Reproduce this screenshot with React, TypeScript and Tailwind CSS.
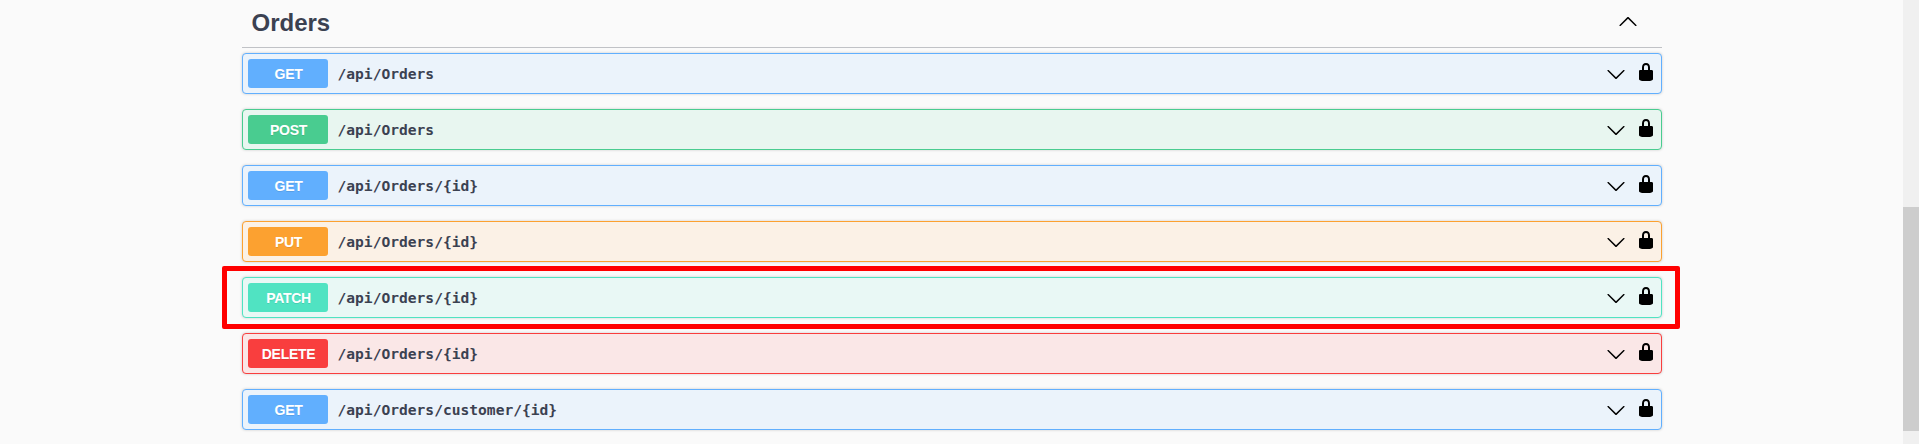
type Method = "GET" | "POST" | "PUT" | "PATCH" | "DELETE";

interface Operation {
  method: Method;
  path: string;
  highlighted?: boolean;
}

const operations: Operation[] = [
  { method: "GET", path: "/api/Orders" },
  { method: "POST", path: "/api/Orders" },
  { method: "GET", path: "/api/Orders/{id}" },
  { method: "PUT", path: "/api/Orders/{id}" },
  { method: "PATCH", path: "/api/Orders/{id}", highlighted: true },
  { method: "DELETE", path: "/api/Orders/{id}" },
  { method: "GET", path: "/api/Orders/customer/{id}" },
];

const styles: Record<Method, { row: string; badge: string }> = {
  GET: { row: "border-[#61affe] bg-[#ebf3fb]", badge: "bg-[#61affe]" },
  POST: { row: "border-[#49cc90] bg-[#e8f6f0]", badge: "bg-[#49cc90]" },
  PUT: { row: "border-[#fca130] bg-[#fbf1e6]", badge: "bg-[#fca130]" },
  PATCH: { row: "border-[#50e3c2] bg-[#e9f8f5]", badge: "bg-[#50e3c2]" },
  DELETE: { row: "border-[#f93e3e] bg-[#fae7e7]", badge: "bg-[#f93e3e]" },
};

function ArrowUp() {
  return (
    <svg viewBox="0 0 20 20" className="size-5">
      <path d="M17.418 14.908c.272.268.709.268.979 0s.271-.701 0-.969l-7.908-7.83c-.27-.268-.707-.268-.979 0l-7.908 7.83c-.27.268-.27.701 0 .969.271.268.709.268.979 0L10 7.767l7.418 7.141z" />
    </svg>
  );
}

function ArrowDown() {
  return (
    <svg viewBox="0 0 20 20" className="size-5">
      <path d="M17.418 6.109c.272-.268.709-.268.979 0s.271.701 0 .969l-7.908 7.83c-.27.268-.707.268-.979 0l-7.908-7.83c-.27-.268-.27-.701 0-.969.271-.268.709-.268.979 0L10 13.25l7.418-7.141z" />
    </svg>
  );
}

function Lock() {
  return (
    <svg viewBox="0 0 20 20" className="size-5">
      <path d="M15.8 8H14V5.6C14 2.703 12.665 1 10 1 7.334 1 6 2.703 6 5.6V8H4c-.553 0-1 .646-1 1.199V17c0 .549.428 1.139.951 1.307l1.197.387C5.672 18.861 6.55 19 7.1 19h5.8c.549 0 1.428-.139 1.951-.307l1.196-.387c.524-.167.953-.757.953-1.306V9.199C17 8.646 16.352 8 15.8 8zM12 8H8V5.199C8 3.754 8.797 3 10 3c1.203 0 2 .754 2 2.199V8z" />
    </svg>
  );
}

function OperationRow({ method, path, highlighted }: Operation) {
  const { row, badge } = styles[method];
  return (
    <div
      className={`relative flex h-[41px] items-center rounded-[4px] border px-[5px] shadow-[0_0_3px_rgba(0,0,0,0.19)] ${row}`}
    >
      <span
        className={`flex h-[29px] w-20 items-center justify-center rounded-[3px] pt-[2px] pl-px text-sm leading-[17px] font-bold tracking-[-0.3px] text-white [text-shadow:0_1px_0_rgba(0,0,0,0.1)] ${badge}`}
      >
        {method}
      </span>
      <span className="flex-1 pl-[9.5px] font-['DejaVu_Sans_Mono',monospace] text-[14.6px] leading-5 font-bold">
        {path}
      </span>
      <span className="mr-[10px] pt-px text-black">
        <ArrowDown />
      </span>
      <span className="pb-[3px] text-black">
        <Lock />
      </span>
      {highlighted && (
        <div className="absolute -top-3 -right-[19px] -bottom-3 -left-[21px] z-10 rounded-[2px] border-5 border-[#ff0000]" />
      )}
    </div>
  );
}

export default function App() {
  return (
    <div className="flex h-[444px] overflow-hidden bg-[#fafafa] font-['Liberation_Sans',Arial,sans-serif] text-[#3b4151]">
      <main className="flex-1 pl-[242px]">
        <section className="w-[1420px]">
          <header className="flex h-12 items-start justify-between border-b border-[#3b4151]/30 pr-6 pl-[9.5px]">
            <h3 className="pt-2 text-2xl leading-[30px] font-bold">Orders</h3>
            <span className="pt-[11px] text-black">
              <ArrowUp />
            </span>
          </header>
          <div className="flex flex-col gap-[15px] pt-[5px]">
            {operations.map((op, i) => (
              <OperationRow key={i} {...op} />
            ))}
          </div>
        </section>
      </main>
      <div className="w-4 bg-[#f0f0f0] pt-[207px]">
        <div className="h-[224px] bg-[#cdcdcd]" />
      </div>
    </div>
  );
}
